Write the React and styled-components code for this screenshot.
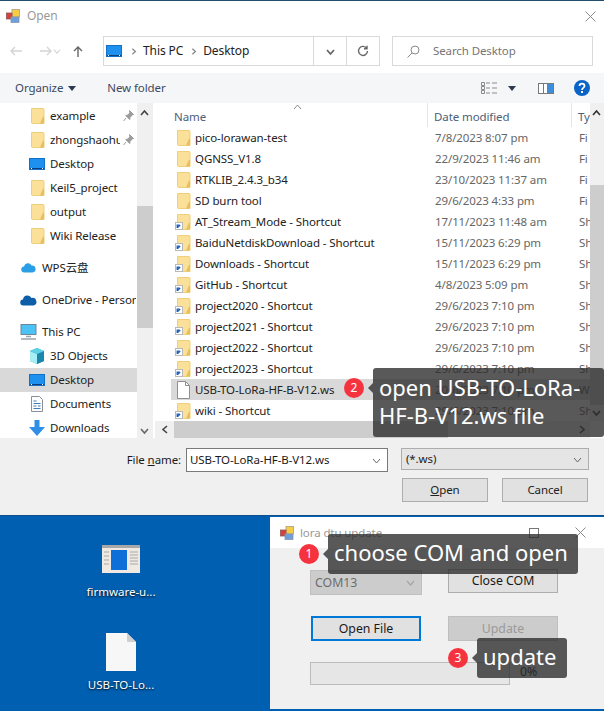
import React from "react";
import styled, { createGlobalStyle } from "styled-components";

const Global = createGlobalStyle`
  html, body { margin: 0; padding: 0; background: #fff; }
  * { box-sizing: border-box; }
`;
const font = `"Noto Sans", "Noto Sans CJK SC", sans-serif`;

const Page = styled.div`
  position: relative; width: 604px; height: 711px; overflow: hidden;
  display: flex; flex-direction: column;
  font: 11.5px/16px ${font}; letter-spacing: -0.1px; color: #1a1a1a; border-top: 1px solid #1f4d6b;
`;
const Dialog = styled.section`height: 514px; flex: none; display: flex; flex-direction: column; background: #fff;`;
const TitleBar = styled.header`height: 30px; flex: none; display: flex; align-items: center; padding: 0 8px 0 6px; gap: 7px;`;
const TitleText = styled.span`flex: 1; color: #9a9a9a; font-size: 12px;`;
const NavBar = styled.div`height: 42px; flex: none; display: flex; align-items: flex-start; padding-top: 5px;`;
const NavArrows = styled.div`width: 103px; height: 30px; flex: none; display: flex; align-items: center; padding-left: 9px;`;
const AddressBox = styled.div`
  width: 277px; height: 30px; flex: none; display: flex; align-items: center;
  border: 1px solid #d9d9d9; padding-left: 2px;
`;
const Crumb = styled.span`color: #222; margin: 0 7px; font-size: 12px;`;
const CrumbSep = styled.span`display: flex; width: 6px; justify-content: center;`;
const AddressSpacer = styled.div`flex: 1;`;
const AddressButton = styled.div`
  width: 33px; height: 28px; flex: none; display: flex; align-items: center; justify-content: center;
  border-left: 1px solid #d9d9d9;
`;
const SearchBox = styled.div`
  width: 201px; height: 30px; flex: none; margin-left: 12px; display: flex; align-items: center; gap: 13px;
  border: 1px solid #d9d9d9; padding-left: 14px; color: #767676;
`;
const Toolbar = styled.div`
  height: 30px; flex: none; background: #f5f6f7; display: flex; align-items: center; padding-left: 15px;
  color: #3b4a63;
`;
const ToolLabel = styled.span`display: flex; align-items: center; gap: 5px;`;
const NewFolder = styled(ToolLabel)`margin-left: 31px; flex: 1;`;
const ToolIcons = styled.div`display: flex; align-items: center; padding-right: 14px;`;
const Body = styled.div`height: 335px; flex: none; display: flex; background: #fff;`;
const NavPane = styled.nav`width: 137px; flex: none; padding-top: 1px; overflow: hidden; background: #fff;`;
const NavGroup = styled.div`margin-bottom: 8px;`;
const NavRow = styled.div`
  height: 24px; display: flex; align-items: center; position: relative; white-space: nowrap;
  padding-left: ${p => (p.$top ? 20 : 28)}px; gap: 5px;
  background: ${p => (p.$selected ? "#d9d9d9" : "transparent")};
`;
const NavIconSlot = styled.span`width: 17px; display: flex; justify-content: center; flex: none;`;
const NavLabel = styled.span`width: ${p => p.$w}px; overflow: hidden; flex: none; color: #222;`;
const PinSlot = styled.span`position: absolute; left: 123px; top: 6px; display: flex;`;
const Track = styled.div`
  background: #f0f0f0; position: relative; flex: none;
  width: ${p => p.$w}; height: ${p => p.$h};
`;
const Thumb = styled.div`position: absolute; background: #cdcdcd;`;
const VThumb = styled(Thumb)`left: 0; right: 0; top: ${p => p.$top}px; height: ${p => p.$len}px;`;
const HThumb = styled(Thumb)`top: 0; bottom: 0; left: ${p => p.$left}px; width: ${p => p.$len}px;`;
const Arrow = styled.span`position: absolute; display: flex;`;
const NavGap = styled.div`width: 2px; flex: none;`;
const FilesPane = styled.div`flex: 1; min-width: 0; display: flex; flex-direction: column;`;
const FilesMain = styled.div`flex: 1; min-height: 0; display: flex;`;
const FileList = styled.div`flex: 1; min-width: 0; overflow: hidden; position: relative;`;
const HeaderRow = styled.div`height: 24px; display: flex; padding-left: 13px; color: #4c607a; align-items: stretch;`;
const HeadCell = styled.div`
  display: flex; align-items: center; padding: 3px 0 0 6px; width: ${p => p.$w}px; flex: none; overflow: hidden;
  border-right: ${p => (p.$line ? "1px solid #e5e5e5" : "none")};
`;
const SortCaret = styled.span`position: absolute; left: 138px; top: 0; display: flex;`;
const FileRow = styled.div`
  height: 21px; display: flex; align-items: center; margin-left: 16px; white-space: nowrap;
  background: ${p => (p.$selected ? "#d9d9d9" : "transparent")};
`;
const NameCell = styled.div`width: 264px; flex: none; display: flex; align-items: center; padding-left: 4px; gap: 4px; color: #222;`;
const DateCell = styled.div`width: 144px; flex: none; color: #666;`;
const TypeCell = styled.div`flex: 1; overflow: hidden; color: #666;`;
const HRow = styled.div`height: 17px; flex: none; display: flex;`;
const Corner = styled.div`flex: 1; background: #fff;`;
const Footer = styled.footer`flex: 1; background: #f0f0f0; display: grid; grid-template-columns: 186px 202px 201px; grid-template-rows: 24px 24px; row-gap: 6px; padding-top: 10px; align-content: start;`;
const FileLabel = styled.label`text-align: right; padding-right: 5px; line-height: 24px; color: #1a1a1a;`;
const NameInput = styled.div`
  border: 1px solid #7a7a7a; background: #fff; display: flex; align-items: center; justify-content: space-between;
  padding: 0 6px 0 3px; color: #1a1a1a; white-space: nowrap;
`;
const TypeSelect = styled.div`
  margin-left: 13px; height: 22px; border: 1px solid #adadad; background: #e5e5e5; display: flex; align-items: center;
  justify-content: space-between; padding: 0 6px 0 4px; color: #222;
`;
const DialogButtons = styled.div`grid-column: 3; margin-left: 14px; display: flex; gap: 14px;`;
const DlgButton = styled.div`
  width: 86px; flex: none; height: 24px; border: 1px solid #adadad; background: #e1e1e1; display: flex;
  align-items: center; justify-content: center; color: #222;
`;
const Desktop = styled.section`
  flex: 1; min-height: 0; background: #005fb0; border-top: 1px solid #0b4f8c; display: flex;
`;
const IconColumn = styled.div`width: 270px; flex: none; display: flex; flex-direction: column; align-items: center; padding: 29px 28px 0 0;`;
const DesktopItem = styled.div`
  width: 80px; height: ${p => p.$h}px; display: flex; flex-direction: column; align-items: center; gap: ${p => p.$gap}px;
  color: #fff; font-size: 11.5px; letter-spacing: 0; text-shadow: 0 1px 2px #000; white-space: nowrap;
`;
const AppWindow = styled.div`flex: 1; margin: 1px 0 2px; background: #f0f0f0; display: flex; flex-direction: column;`;
const AppTitle = styled.div`height: 31px; flex: none; background: #fff; display: flex; align-items: center; padding: 0 18px 0 10px; gap: 6px;`;
const AppTitleText = styled.span`flex: 1; color: #9a9a9a;`;
const AppControls = styled.div`display: flex; align-items: center; gap: 36px;`;
const MaxBox = styled.span`width: 10px; height: 10px; border: 1px solid #777; display: block;`;
const AppGrid = styled.div`
  padding: 22px 0 0 40px; display: grid; grid-template-columns: 112px 110px; column-gap: 26px;
  grid-template-rows: 25px 25px 23px; row-gap: 21px; font-size: 12.3px; letter-spacing: 0;
`;
const ComSelect = styled.div`
  background: #cccccc; border: 1px solid #c0c0c0; display: flex; align-items: center; justify-content: space-between;
  padding: 0 6px 0 4px; color: #6d6d6d;
`;
const AppButton = styled.div`
  display: flex; align-items: center; justify-content: center; color: #1a1a1a; border: 1px solid #adadad; background: #e1e1e1;
  height: 24px; margin-top: -1px;
`;
const FocusButton = styled(AppButton)`
  height: 25px; margin: 0 0 0 1px; width: 110px; border: 2px solid #0078d7;
`;
const DisabledButton = styled(AppButton)`
  height: 25px; margin: 0; background: #cccccc; border-color: #bfbfbf; color: #9a9a9a;
`;
const ProgressRow = styled.div`grid-column: 1 / 3; display: flex; align-items: flex-start; gap: 10px;`;
const ProgressTrack = styled.div`width: 200px; height: 23px; background: #e6e6e6; border: 1px solid #bcbcbc; flex: none;`;
const Percent = styled.span`color: #1a1a1a; margin-top: 2px;`;

const Callout = styled.div`
  position: absolute; left: ${p => p.$x}px; top: ${p => p.$y}px; width: ${p => p.$w}px; height: ${p => p.$h}px;
  background: rgba(42, 42, 42, 0.78); color: #fff; border-radius: 3px; font: 22px/28px ${font}; letter-spacing: 0;
  padding: ${p => p.$pad}px 0 0 6px; white-space: pre;
  &::before {
    content: ""; position: absolute; left: -5px; top: 15px; border: 5px solid transparent; border-left: 0;
    border-right-color: rgba(42, 42, 42, 0.78);
  }
`;
const Badge = styled.div`
  position: absolute; left: ${p => p.$x}px; top: ${p => p.$y}px; width: 20px; height: 20px; border-radius: 50%;
  background: #f5333f; color: #fff; font: 12px/20px ${font}; text-align: center;
`;

const Folder = ({ shortcut }) => (
  <svg width="16" height="16" viewBox="0 0 16 16" style={{ flex: "none", display: "block" }}>
    <path d="M2.500.5h11.500a1 1 0 0 1 1 1v14H3.500a1 1 0 0 1-1-1z" fill="#fbe09a" stroke="#efcf7a" />
    <path d="M13.500 9.500l1.500-1v7H11z" fill="#e9bf5d" />
    {shortcut && (
      <>
        <rect x="0.500" y="8.500" width="7" height="7" fill="#fff" stroke="#b9b9b9" />
        <path d="M2.200 14v-2.800h2.600M2.600 13.600l2.600-2.600" fill="none" stroke="#1c5fb8" strokeWidth="1.300" />
      </>
    )}
  </svg>
);
const Monitor = () => (
  <svg width="16" height="12" viewBox="0 0 16 12" style={{ display: "block" }}>
    <rect x=".5" y=".5" width="15" height="11" fill="#1e90ee" stroke="#1470c4" />
    <path d="M1 10.500h14" stroke="#0b3f7d" />
    <path d="M2 10.500h1M13 10.500h1" stroke="#fff" />
  </svg>
);
const PC = () => (
  <svg width="17" height="16" viewBox="0 0 17 16" style={{ display: "block" }}>
    <rect x="1" y=".5" width="15" height="10" fill="#4cc2f5" stroke="#6f8796" />
    <path d="M6 12.500h5M1 15h15" stroke="#9aa5ad" strokeWidth="1.400" />
  </svg>
);
const Cube = () => (
  <svg width="16" height="16" viewBox="0 0 16 16" style={{ display: "block" }}>
    <path d="M8 0l7 3v10l-7 3-7-3V3z" fill="#2a9dc2" />
    <path d="M1 3l7 3v10l-7-3z" fill="#a8eef5" />
    <path d="M8 6l7-3v10l-7 3z" fill="#1c87ad" />
    <path d="M1 3l7-3 7 3-7 3z" fill="#5fd3e6" />
  </svg>
);
const DocsIcon = () => (
  <svg width="12" height="16" viewBox="0 0 12 16" style={{ display: "block" }}>
    <path d="M.5.5h8l3 3v12H.5z" fill="#fdfdfd" stroke="#8a9098" />
    <path d="M2.500 5h3M2.500 7.500h7M2.500 10h3M7 10h2.500M2.500 12.500h7" stroke="#3c7cb8" />
  </svg>
);
const DownloadIcon = () => (
  <svg width="16" height="16" viewBox="0 0 16 16" style={{ display: "block" }}>
    <path d="M5.500 0h5v7H16l-8 9-8-9h5.500z" fill="#2f8fe6" />
  </svg>
);
const Pin = () => (
  <svg width="11" height="12" viewBox="0 0 11 12" style={{ display: "block" }}>
    <path d="M6.500.5l4 4-1.500.5-2 2.500-.3 2-4-4 2-.5L7 3zM3 8l-2.500 3" fill="#9c9c9c" stroke="#9c9c9c" />
  </svg>
);
const Chevron = ({ dir = "up", color = "#555", w = 1.6, size = 9 }) => {
  const d = { up: "M1 6l3.500-4L8 6", down: "M1 3l3.500 4L8 3", left: "M6 1L2 4.500 6 8", right: "M3 1l4 3.500L3 8" }[dir];
  return (
    <svg width={size} height={size} viewBox="0 0 9 9" style={{ display: "block", flex: "none" }}>
      <path d={d} fill="none" stroke={color} strokeWidth={w} />
    </svg>
  );
};
const NavArrow = ({ d, color, left }) => (
  <svg width="14" height="12" viewBox="0 0 14 12" style={{ display: "block", marginLeft: left }}>
    <path d={d} fill="none" stroke={color} strokeWidth="1.400" />
  </svg>
);
const WinIcon = () => (
  <svg width="14" height="14" viewBox="0 0 14 14" style={{ display: "block", flex: "none" }}>
    <rect x="6" y=".5" width="7.500" height="7.500" fill="#f6cb45" stroke="#a9a08a" strokeWidth=".8" />
    <rect x=".5" y="4" width="5.500" height="6" fill="#d8403a" stroke="#8c5a58" strokeWidth=".8" />
    <rect x="5" y="8" width="8" height="5.500" fill="#6d9fdc" stroke="#8a96a8" strokeWidth=".8" />
  </svg>
);
const CloseX = () => (
  <svg width="11" height="11" viewBox="0 0 11 11" style={{ display: "block", flex: "none" }}>
    <path d="M.5.5l10 10M10.500.5l-10 10" stroke="#8a8a8a" strokeWidth="1" />
  </svg>
);
const Caret = () => (
  <svg width="8" height="5" viewBox="0 0 8 5" style={{ display: "block" }}>
    <path d="M0 0h8L4 5z" fill="#2b3850" />
  </svg>
);

const navTop = [
  { label: "example", w: 70, pin: true },
  { label: "zhongshaohu", w: 70, pin: true },
  { label: "Desktop", w: 80, icon: <Monitor /> },
  { label: "Keil5_project", w: 80 },
  { label: "output", w: 80 },
  { label: "Wiki Release", w: 80 },
];
const navPC = [
  { label: "3D Objects", icon: <Cube /> },
  { label: "Desktop", icon: <Monitor />, selected: true },
  { label: "Documents", icon: <DocsIcon /> },
  { label: "Downloads", icon: <DownloadIcon /> },
];
const sc = "29/6/2023 7:10 pm";
const files = [
  ["pico-lorawan-test", "7/8/2023 8:07 pm", "Fi"],
  ["QGNSS_V1.8", "22/9/2023 11:46 am", "Fi"],
  ["RTKLIB_2.4.3_b34", "23/10/2023 11:37 am", "Fi"],
  ["SD burn tool", "29/6/2023 4:33 pm", "Fi"],
  ["AT_Stream_Mode - Shortcut", "17/11/2023 11:48 am", "Sh", 1],
  ["BaiduNetdiskDownload - Shortcut", "15/11/2023 6:29 pm", "Sh", 1],
  ["Downloads - Shortcut", "15/11/2023 6:29 pm", "Sh", 1],
  ["GitHub - Shortcut", "4/8/2023 5:09 pm", "Sh", 1],
  ["project2020 - Shortcut", sc, "Sh", 1],
  ["project2021 - Shortcut", sc, "Sh", 1],
  ["project2022 - Shortcut", sc, "Sh", 1],
  ["project2023 - Shortcut", sc, "Sh", 1],
  ["USB-TO-LoRa-HF-B-V12.ws", "20/6/2023 7:10 pm", "W", 2],
  ["wiki - Shortcut", sc, "Sh", 1],
];
const DocIcon = () => (
  <svg width="16" height="18" viewBox="0 0 16 18" style={{ flex: "none", display: "block" }}>
    <path d="M2.500.5h8l4 4v13h-12z" fill="#fff" stroke="#8f8f8f" />
    <path d="M10.500.5v4h4" fill="none" stroke="#8f8f8f" />
  </svg>
);

export default function App() {
  return (
    <Page>
      <Global />
      <Dialog>
        <TitleBar>
          <WinIcon />
          <TitleText>Open</TitleText>
          <CloseX />
        </TitleBar>
        <NavBar>
          <NavArrows>
            <NavArrow d="M13 6H2M6 2L2 6l4 4" color="#d4d4d4" />
            <NavArrow d="M1 6h11M8 2l4 4-4 4" color="#d4d4d4" left="16px" />
            <Chevron dir="down" color="#d4d4d4" w={1.2} size={8} />
            <NavArrow d="M7 12V2M3 6l4-4 4 4" color="#666" left="10px" />
          </NavArrows>
          <AddressBox>
            <Monitor />
            <CrumbSep style={{ marginLeft: 8 }}><Chevron dir="right" color="#888" size={7} /></CrumbSep>
            <Crumb>This PC</Crumb>
            <CrumbSep><Chevron dir="right" color="#888" size={7} /></CrumbSep>
            <Crumb>Desktop</Crumb>
            <AddressSpacer />
            <AddressButton><Chevron dir="down" color="#666" w={1.8} /></AddressButton>
            <AddressButton>
              <svg width="12" height="12" viewBox="0 0 12 12">
                <path d="M9.800 3.500A4.500 4.500 0 1 0 10.500 6M10 .8v3H7" fill="none" stroke="#666" strokeWidth="1.400" />
              </svg>
            </AddressButton>
          </AddressBox>
          <SearchBox>
            <svg width="13" height="13" viewBox="0 0 13 13" style={{ flex: "none" }}>
              <circle cx="8" cy="5" r="4" fill="none" stroke="#8a8a8a" />
              <path d="M5 8L.5 12.500" stroke="#8a8a8a" />
            </svg>
            Search Desktop
          </SearchBox>
        </NavBar>
        <Toolbar>
          <ToolLabel>Organize <Caret /></ToolLabel>
          <NewFolder>New folder</NewFolder>
          <ToolIcons>
            <svg width="17" height="12" viewBox="0 0 17 12" style={{ display: "block" }}>
              <path d="M.5.5h3v3h-3zM.5 4.500h3v3h-3zM.5 8.500h3v3h-3z" fill="none" stroke="#8b8b8b" />
              <path d="M5 1h4M11 1h5M5 6h4M11 6h5M5 11h4M11 11h5" stroke="#8b8b8b" />
            </svg>
            <span style={{ marginLeft: 10 }}><Caret /></span>
            <svg width="16" height="11" viewBox="0 0 16 11" style={{ display: "block", marginLeft: 22 }}>
              <rect x=".5" y=".5" width="15" height="10" fill="#fff" stroke="#777" />
              <rect x="9" y="1" width="6" height="9" fill="#3d8fdc" />
              <path d="M5.500 1v9" stroke="#777" />
            </svg>
            <svg width="16" height="16" viewBox="0 0 16 16" style={{ display: "block", marginLeft: 20 }}>
              <circle cx="8" cy="8" r="8" fill="#0a64c8" />
              <path d="M5.500 6c0-3.200 5-3.200 5 0 0 2-2.500 1.800-2.500 4" fill="none" stroke="#fff" strokeWidth="1.700" />
              <rect x="7" y="11" width="2" height="2" fill="#fff" />
            </svg>
          </ToolIcons>
        </Toolbar>
        <Body>
          <NavPane>
            <NavGroup>
              {navTop.map(n => (
                <NavRow key={n.label}>
                  <NavIconSlot>{n.icon || <Folder />}</NavIconSlot>
                  <NavLabel $w={n.w}>{n.label}</NavLabel>
                  {n.pin && <PinSlot><Pin /></PinSlot>}
                </NavRow>
              ))}
            </NavGroup>
            <NavGroup>
              <NavRow $top>
                <NavIconSlot>
                  <svg width="15" height="12" viewBox="0 0 15 12"><path d="M3.500 10.500a3 3 0 0 1-.5-6 4 4 0 0 1 7.500-1 3.500 3.500 0 0 1 1 7z" fill="#2a9fe8" /></svg>
                </NavIconSlot>
                <NavLabel $w={95}>WPS云盘</NavLabel>
              </NavRow>
            </NavGroup>
            <NavGroup>
              <NavRow $top>
                <NavIconSlot>
                  <svg width="17" height="11" viewBox="0 0 17 11"><path d="M3.500 10.500a3 3 0 0 1-.5-6 4.500 4.500 0 0 1 8.500-1.500 3.800 3.800 0 0 1 2 7.500z" fill="#0f5fa8" /></svg>
                </NavIconSlot>
                <NavLabel $w={94}>OneDrive - Personal</NavLabel>
              </NavRow>
            </NavGroup>
            <NavRow $top>
              <NavIconSlot><PC /></NavIconSlot>
              <NavLabel $w={95}>This PC</NavLabel>
            </NavRow>
            {navPC.map(n => (
              <NavRow key={n.label} $selected={n.selected}>
                <NavIconSlot>{n.icon}</NavIconSlot>
                <NavLabel $w={80}>{n.label}</NavLabel>
              </NavRow>
            ))}
          </NavPane>
          <Track $w="16px" $h="335px">
            <VThumb $top={103} $len={122} />
            <Arrow style={{ left: 3, top: 6 }}><Chevron dir="up" color="#444" /></Arrow>
            <Arrow style={{ left: 3, top: 323 }}><Chevron dir="down" color="#666" /></Arrow>
          </Track>
          <NavGap />
          <FilesPane>
            <FilesMain>
              <FileList>
                <SortCaret><Chevron dir="up" color="#8a8a8a" w={1} /></SortCaret>
                <HeaderRow>
                  <HeadCell $w={260} $line>Name</HeadCell>
                  <HeadCell $w={144} $line>Date modified</HeadCell>
                  <HeadCell $w={20}>Type</HeadCell>
                </HeaderRow>
                {files.map(([name, date, type, kind]) => (
                  <FileRow key={name} $selected={kind === 2}>
                    <NameCell>
                      {kind === 2 ? <DocIcon /> : <Folder shortcut={kind === 1} />}
                      {name}
                    </NameCell>
                    <DateCell>{date}</DateCell>
                    <TypeCell>{type}</TypeCell>
                  </FileRow>
                ))}
              </FileList>
              <Track $w="14px" $h="318px">
                <VThumb $top={82} $len={220} />
                <Arrow style={{ left: 2, top: 6 }}><Chevron dir="up" color="#333" /></Arrow>
                <Arrow style={{ left: 2, top: 305 }}><Chevron dir="down" color="#333" /></Arrow>
              </Track>
            </FilesMain>
            <HRow>
              <Track $w="435px" $h="17px">
                <HThumb $left={19} $len={274} />
                <Arrow style={{ left: 6, top: 4 }}><Chevron dir="left" color="#444" /></Arrow>
                <Arrow style={{ left: 422, top: 4 }}><Chevron dir="right" color="#444" /></Arrow>
              </Track>
              <Corner />
            </HRow>
          </FilesPane>
        </Body>
        <Footer>
          <FileLabel>File <u>n</u>ame:</FileLabel>
          <NameInput>USB-TO-LoRa-HF-B-V12.ws <Chevron dir="down" color="#666" w={1} /></NameInput>
          <TypeSelect>(*.ws) <Chevron dir="down" color="#666" w={1} /></TypeSelect>
          <DialogButtons>
            <DlgButton><span><u>O</u>pen</span></DlgButton>
            <DlgButton>Cancel</DlgButton>
          </DialogButtons>
        </Footer>
      </Dialog>
      <Desktop>
        <IconColumn>
          <DesktopItem $h={88} $gap={11}>
            <svg width="38" height="28" viewBox="0 0 38 28" style={{ flex: "none" }}>
              <rect width="38" height="28" fill="#efe9e2" />
              <rect width="38" height="3" fill="#a8a8a8" />
              <rect x="9" y="5" width="16" height="20" fill="#0f6fd8" />
              <path d="M2 7h5M2 11h5M2 15h5M2 19h5M28 7h8M28 10h8M28 13h8M28 16h8M28 19h8" stroke="#a9a9a9" />
            </svg>
            firmware-u...
          </DesktopItem>
          <DesktopItem $h={60} $gap={6}>
            <svg width="30" height="38" viewBox="0 0 30 38" style={{ flex: "none" }}>
              <path d="M0 0h21l9 9v29H0z" fill="#f7f7f7" />
              <path d="M21 0l9 9h-9z" fill="#cfcfcf" />
            </svg>
            USB-TO-Lo...
          </DesktopItem>
        </IconColumn>
        <AppWindow>
          <AppTitle>
            <WinIcon />
            <AppTitleText>lora dtu update</AppTitleText>
            <AppControls>
              <MaxBox />
              <CloseX />
            </AppControls>
          </AppTitle>
          <AppGrid>
            <ComSelect>COM13 <Chevron dir="down" color="#a5a5a5" w={1.2} /></ComSelect>
            <AppButton>Close COM</AppButton>
            <FocusButton>Open File</FocusButton>
            <DisabledButton>Update</DisabledButton>
            <ProgressRow>
              <ProgressTrack />
              <Percent>0%</Percent>
            </ProgressRow>
          </AppGrid>
        </AppWindow>
      </Desktop>
      <Callout $x={373} $y={367} $w={231} $h={69} $pad={5}>{"open USB-TO-LoRa-\nHF-B-V12.ws file"}</Callout>
      <Badge $x={344} $y={377}>2</Badge>
      <Callout $x={328} $y={533} $w={250} $h={40} $pad={4}>choose COM and open</Callout>
      <Badge $x={299} $y={543}>1</Badge>
      <Callout $x={477} $y={637} $w={90} $h={40} $pad={4}>update</Callout>
      <Badge $x={448} $y={647}>3</Badge>
    </Page>
  );
}
